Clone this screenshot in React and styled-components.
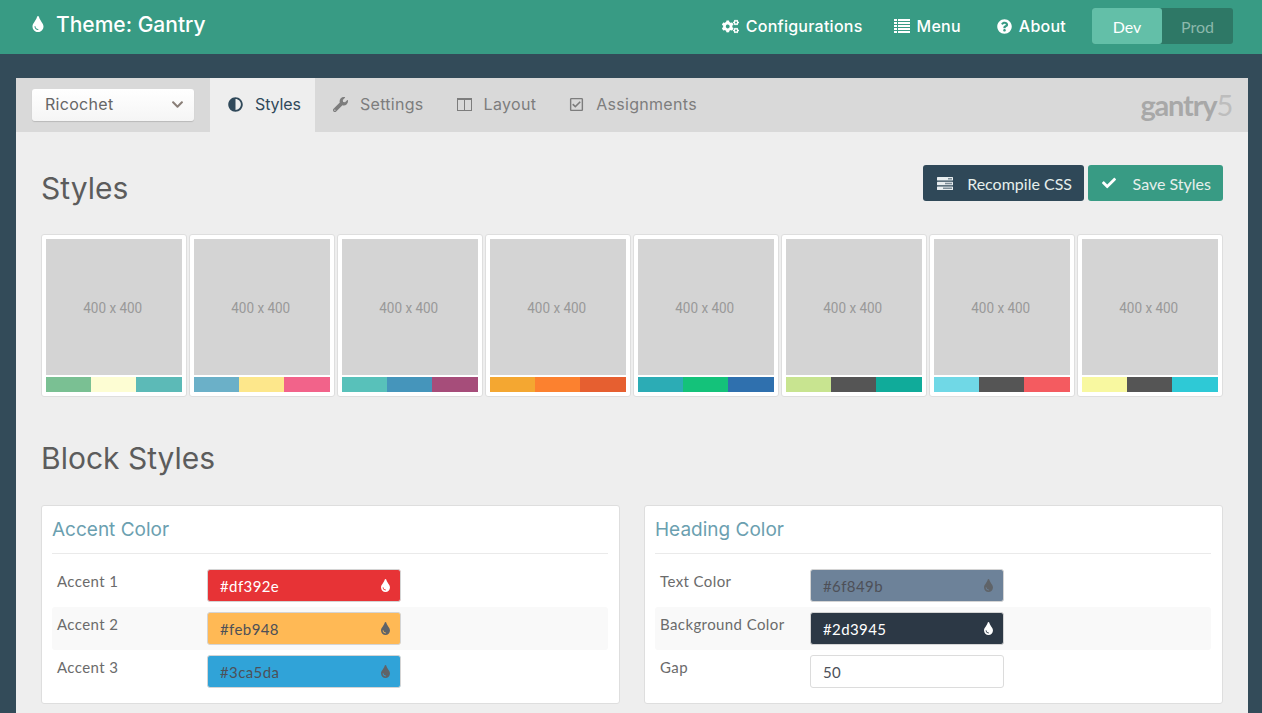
import React from "react";
import styled, { createGlobalStyle } from "styled-components";
import {
  FaTint, FaCogs, FaQuestionCircle, FaAdjust, FaWrench,
  FaRegCheckSquare, FaCheck, FaChevronDown,
} from "react-icons/fa";

const GlobalStyle = createGlobalStyle`
  html, body { margin: 0; height: 100%; overflow: hidden; }
  body { background: #334b59; font-family: "Lato", sans-serif; }
  * { box-sizing: border-box; }
`;

const display = `"Inter", "Liberation Sans", sans-serif`;

const Page = styled.div`
  height: 713px;
  overflow: hidden;
`;

const TopBar = styled.header`
  height: 54px;
  background: #389b84;
  display: flex;
  align-items: center;
  padding: 0 29px 2px 30px;
  color: #fff;
  font-family: ${display};
`;

const Brand = styled.div`
  display: flex;
  align-items: center;
  gap: 10px;
  font-size: 21px;
  font-weight: 500;
  flex: 1;
  margin-top: -4px;
  svg { font-size: 16px; }
`;

const TopLink = styled.a`
  display: flex;
  align-items: center;
  gap: 7px;
  font-size: 16px;
  font-weight: 450;
  letter-spacing: 0.25px;
  margin-right: ${(p) => p.$after}px;
  svg { font-size: 15px; }
`;

const CogIcon = styled(FaCogs)`
  && { font-size: 17px; }
`;

const Switch = styled.div`
  display: flex;
  height: 36px;
  background: #2e7866;
  border-radius: 3px;
  font-family: "Lato", sans-serif;
  font-size: 16px;
`;

const SwitchOption = styled.div`
  width: ${(p) => (p.$active ? "70px" : "71px")};
  display: flex;
  align-items: center;
  justify-content: center;
  border-radius: 3px;
  background: ${(p) => (p.$active ? "#63bfa8" : "transparent")};
  color: ${(p) => (p.$active ? "#fff" : "#8cb8ac")};
`;

const Panel = styled.main`
  margin: 24px 14px 0 16px;
  padding-bottom: 40px;
  background: #eee;
`;

const TabBar = styled.nav`
  height: 54px;
  background: #d9d9d9;
  display: flex;
  align-items: stretch;
  padding-left: 16px;
  font-family: ${display};
`;

const Select = styled.div`
  width: 162px;
  height: 32px;
  margin: 11px 16px 0 0;
  padding: 0 10px 2px 13px;
  display: flex;
  align-items: center;
  justify-content: space-between;
  border-radius: 3px;
  background: linear-gradient(#fff, #f5f5f5);
  box-shadow: 0 1px 1px rgba(0, 0, 0, 0.15);
  color: #666;
  font-size: 16px;
  letter-spacing: 0.3px;
  svg { font-size: 13px; color: #8a7f78; }
`;

const Tab = styled.a`
  display: flex;
  align-items: center;
  gap: 12px;
  padding: ${(p) => (p.$active ? "0 14px 2px 18px" : "0 15px 2px 18px")};
  background: ${(p) => (p.$active ? "#eee" : "transparent")};
  color: ${(p) => (p.$active ? "#30495a" : "#7d7d7d")};
  font-size: 16px;
  letter-spacing: ${(p) => (p.$active ? "-0.1px" : "0.3px")};
  svg { font-size: 15px; width: 15px; flex: none; }
`;

const Logo = styled.div`
  margin-left: auto;
  padding: 12px 16px 0 0;
  font-family: "Lato", sans-serif;
  font-size: 29px;
  font-weight: 700;
  letter-spacing: -1.2px;
  line-height: 30px;
  color: #a8a8a8;
  span { color: #bdbdbd; font-weight: 400; }
`;

const Content = styled.div`
  padding: 33px 25px 0;
`;

const SectionHead = styled.div`
  display: flex;
  align-items: center;
  justify-content: space-between;
  height: 36px;
`;

const Title = styled.h2`
  margin: ${(p) => p.$top || 0}px 0 0;
  font-family: ${display};
  font-size: 30px;
  line-height: 40px;
  font-weight: 400;
  color: #5c5c5c;
`;

const Actions = styled.div`
  display: flex;
  gap: 4px;
`;

const Button = styled.button`
  height: 36px;
  width: ${(p) => p.$width}px;
  padding: 0 12px 0 14px;
  border: 0;
  border-radius: 3px;
  display: flex;
  align-items: center;
  justify-content: space-between;
  background: ${(p) => p.$bg};
  color: #e6efec;
  font-family: "Lato", sans-serif;
  font-size: 16px;
  svg { font-size: 14px; color: #fff; }
`;

const Swatches = styled.div`
  display: grid;
  grid-template-columns: repeat(8, 146px);
  column-gap: 2px;
  margin-top: 33px;
`;

const Card = styled.div`
  height: 163px;
  padding: 4px;
  background: #fff;
  border: 1px solid #dedede;
  border-radius: 3px;
  display: flex;
  flex-direction: column;
  gap: 2px;
`;

const Thumb = styled.div`
  height: 136px;
  display: flex;
  align-items: center;
  justify-content: center;
  padding: 2px 2px 0 0;
  background: #d4d4d4;
  color: #999;
  font-family: "Roboto", sans-serif;
  font-size: 15px;
  span { transform: scaleX(0.9); }
`;

const Strip = styled.div`
  height: 15px;
  display: grid;
  grid-template-columns: 45px 45px 46px;
`;

const StripColor = styled.div`
  background: ${(p) => p.$color};
`;

const Blocks = styled.div`
  display: grid;
  grid-template-columns: 579px 579px;
  column-gap: 24px;
  margin-top: 27px;
`;

const Block = styled.section`
  height: 199px;
  padding: 0 11px 0 10px;
  background: #fff;
  border: 1px solid #dedede;
  border-radius: 3px;
`;

const BlockTitle = styled.h3`
  margin: 0 0 10px;
  height: 48px;
  padding-top: 12px;
  border-bottom: 1px solid #eaeaea;
  font-family: ${display};
  font-size: 19px;
  line-height: 24px;
  font-weight: 400;
  color: #6b9fb0;
`;

const Row = styled.div`
  height: 43px;
  padding: 5px 0 0 5px;
  display: flex;
  background: ${(p) => (p.$odd ? "#f9f9f9" : "transparent")};
  border-radius: 3px;
`;

const Label = styled.label`
  width: 150px;
  padding-top: 3px;
  font-size: 15px;
  line-height: 19px;
  color: #6b6b6b;
  letter-spacing: 0.4px;
`;

const Field = styled.div`
  width: 194px;
  height: 33px;
  padding: 0 8px 0 12px;
  display: flex;
  align-items: center;
  justify-content: space-between;
  border: 1px solid ${(p) => (p.$bg ? "#d4d4d4" : "#dcdcdc")};
  border-radius: 3px;
  background: ${(p) => p.$bg || "#fff"};
  color: ${(p) => (p.$light ? "#fff" : "#4d5058")};
  font-size: 15px;
  letter-spacing: 0.4px;
  svg { font-size: 13px; color: ${(p) => (p.$light ? "#fff" : "#5f6368")}; }
`;

function ListIcon() {
  return (
    <svg width="16" height="14" viewBox="0 0 16 14" fill="currentColor">
      {[0, 3, 6, 9, 12].map((y) => (
        <g key={y}>
          <rect x="0" y={y} width="3" height="2" />
          <rect x="4" y={y} width="12" height="2" />
        </g>
      ))}
    </svg>
  );
}

function StackIcon() {
  return (
    <svg width="16" height="13" viewBox="0 0 16 13">
      <rect x="0" y="0" width="16" height="3.5" rx="0.5" fill="#e8eef0" />
      <rect x="0" y="4.75" width="16" height="3.5" rx="0.5" fill="#e8eef0" />
      <rect x="0" y="9.5" width="16" height="3.5" rx="0.5" fill="#e8eef0" />
      <rect x="11" y="1" width="4" height="1.5" fill="#7c8d97" />
      <rect x="8" y="5.75" width="7" height="1.5" fill="#7c8d97" />
      <rect x="6" y="10.5" width="9" height="1.5" fill="#7c8d97" />
    </svg>
  );
}

function ColumnsIcon() {
  return (
    <svg width="15" height="13" viewBox="0 0 15 13" fill="none" stroke="currentColor">
      <rect x="0.5" y="1" width="14" height="11.5" />
      <path d="M7.5 1v11.5" />
      <path d="M0 1h15" strokeWidth="2" />
    </svg>
  );
}

const swatches = [
  ["#7ac093", "#fdfdd3", "#5cbab7"],
  ["#6bb0c8", "#fde78b", "#f2638a"],
  ["#58c1ba", "#4595bb", "#a64d7a"],
  ["#f4a731", "#fc812f", "#e65f30"],
  ["#2cacb5", "#14c27a", "#2f70ae"],
  ["#c8e490", "#555555", "#10ab9a"],
  ["#70d8e6", "#555555", "#f45b60"],
  ["#f8f8a0", "#555555", "#2ec9d6"],
];

const accentRows = [
  { label: "Accent 1", value: "#df392e", bg: "#e73336", light: true },
  { label: "Accent 2", value: "#feb948", bg: "#ffb955" },
  { label: "Accent 3", value: "#3ca5da", bg: "#30a3d8" },
];

const headingRows = [
  { label: "Text Color", value: "#6f849b", bg: "#6d8299" },
  { label: "Background Color", value: "#2d3945", bg: "#2c3845", light: true },
  { label: "Gap", value: "50" },
];

function BlockCard({ title, rows }) {
  return (
    <Block>
      <BlockTitle>{title}</BlockTitle>
      {rows.map((r, i) => (
        <Row key={r.label} $odd={i === 1}>
          <Label>{r.label}</Label>
          <Field $bg={r.bg} $light={r.light}>
            {r.value}
            {r.bg && <FaTint />}
          </Field>
        </Row>
      ))}
    </Block>
  );
}

export default function App() {
  return (
    <Page>
      <GlobalStyle />
      <TopBar>
        <Brand><FaTint />Theme: Gantry</Brand>
        <TopLink $after={31}><CogIcon />Configurations</TopLink>
        <TopLink $after={36}><ListIcon />Menu</TopLink>
        <TopLink $after={26}><FaQuestionCircle />About</TopLink>
        <Switch>
          <SwitchOption $active>Dev</SwitchOption>
          <SwitchOption>Prod</SwitchOption>
        </Switch>
      </TopBar>
      <Panel>
        <TabBar>
          <Select>Ricochet<FaChevronDown /></Select>
          <Tab $active><FaAdjust />Styles</Tab>
          <Tab><FaWrench />Settings</Tab>
          <Tab><ColumnsIcon />Layout</Tab>
          <Tab><FaRegCheckSquare />Assignments</Tab>
          <Logo>gantry<span>5</span></Logo>
        </TabBar>
        <Content>
          <SectionHead>
            <Title $top={10}>Styles</Title>
            <Actions>
              <Button $bg="#2f4858" $width={161}><StackIcon />Recompile CSS</Button>
              <Button $bg="#389b84" $width={135}><FaCheck />Save Styles</Button>
            </Actions>
          </SectionHead>
          <Swatches>
            {swatches.map((colors, i) => (
              <Card key={i}>
                <Thumb><span>400 x 400</span></Thumb>
                <Strip>
                  {colors.map((c, j) => <StripColor key={j} $color={c} />)}
                </Strip>
              </Card>
            ))}
          </Swatches>
          <Title $top={41}>Block Styles</Title>
          <Blocks>
            <BlockCard title="Accent Color" rows={accentRows} />
            <BlockCard title="Heading Color" rows={headingRows} />
          </Blocks>
        </Content>
      </Panel>
    </Page>
  );
}
